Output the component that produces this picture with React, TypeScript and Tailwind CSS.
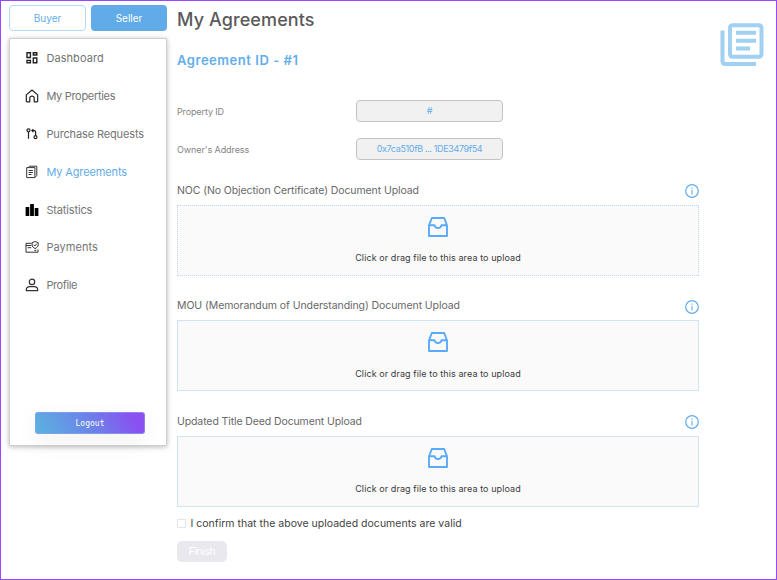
import React from 'react';

function DashboardIcon() {
  return (
    <svg width="14" height="14" viewBox="0 0 14 14" fill="none" stroke="#222" strokeWidth="1.4">
      <path d="M2 1.700h3.400v4.800H2zM8.300 1.700h3.500v2.300H8.300zM2 9.400h3.400v2.400H2zM8.300 7h3.500v4.800H8.300z" />
    </svg>
  );
}

function HomeIcon() {
  return (
    <svg width="14" height="14" viewBox="0 0 14 14" fill="none" stroke="#222" strokeWidth="1.2" strokeLinejoin="round">
      <path d="M1.300 5.900 7 1l5.700 4.900V12c0 .5-.2.800-.7.800H9.200V9.200C9.200 8 8.300 7.200 7 7.200S4.800 8 4.800 9.200v3.600H2c-.5 0-.7-.3-.7-.8Z" />
    </svg>
  );
}

function RequestsIcon() {
  return (
    <svg width="14" height="14" viewBox="0 0 14 14" fill="none" stroke="#222" strokeWidth="1.200">
      <circle cx="3.500" cy="3.300" r="1.500" />
      <path d="M3.500 4.800v7M7 3.600h2.300c.9 0 1.300.5 1.300 1.300v3.700M8.400 2.100 6.900 3.600l1.500 1.500" />
      <circle cx="10.500" cy="10.200" r="1.500" />
    </svg>
  );
}

function AgreementsIcon() {
  return (
    <svg width="14" height="14" viewBox="0 0 14 14" fill="none" stroke="#333" strokeWidth="1" strokeLinejoin="round">
      <path d="M3.300 2.500 4.500 1.200h7.300v9.300l-1.600 1.700M1.700 2.600h8.200v10H1.700ZM3.700 5.500h4.200M3.700 7.500h4.200M3.700 9.500h2.800" />
    </svg>
  );
}

function StatisticsIcon() {
  return (
    <svg width="14" height="14" viewBox="0 0 14 14" fill="#000">
      <rect x="0.600" y="4" width="3.700" height="9" rx=".5" />
      <rect x="5.100" y="1" width="3.800" height="12" rx=".5" />
      <rect x="9.700" y="5" width="3.700" height="8" rx=".5" />
    </svg>
  );
}

function PaymentsIcon() {
  return (
    <svg width="14" height="14" viewBox="0 0 14 14" fill="none" stroke="#333" strokeWidth="1">
      <path d="M6.500 3.300H1v8.900h12V9.500M1 5.500h5.300M2.700 7.700h3.500M9.300 10.300h2" />
      <path d="M10.100 1.500 13.200 2.700v2.100c0 1.700-1.200 2.900-3.100 3.700C8.200 7.700 7.100 6.500 7.100 4.800V2.700ZM8.600 4.800l1.200 1.200 2-2.300" />
    </svg>
  );
}

function ProfileIcon() {
  return (
    <svg width="14" height="14" viewBox="0 0 14 14" fill="none" stroke="#333" strokeWidth="1.200">
      <circle cx="7" cy="3.900" r="2.700" />
      <path d="M1.300 12.700v-.6c0-2 1.500-3.400 3.400-3.400h4.600c1.900 0 3.400 1.400 3.400 3.400v.6Z" />
    </svg>
  );
}

function LibraryIcon() {
  return (
    <svg width="44" height="44" viewBox="0 0 44 44" fill="none" stroke="#a0d0f2" strokeWidth="4">
      <rect x="10" y="2.200" width="31.500" height="31.500" rx="2.500" />
      <path d="M2.500 7.500v30.800c0 1.800 1 2.800 2.800 2.800H36M16 9.700h20M16 17.700h20M16 25.500h14" />
    </svg>
  );
}

function InboxIcon() {
  return (
    <svg width="20" height="20" viewBox="0 0 20 20" fill="none" stroke="#5aaafa" strokeWidth="1.900" strokeLinejoin="round">
      <path d="M1 8.300 3.800 1h12.400L19 8.300V19H1ZM1 8.300h5.600c.3 1.700 1.600 2.700 3.400 2.700s3.100-1 3.400-2.700H19" />
    </svg>
  );
}

function InfoIcon() {
  return (
    <svg width="14" height="14" viewBox="0 0 14 14" fill="none" stroke="#63ade8">
      <circle cx="7" cy="7" r="6.300" strokeWidth="1.200" />
      <path d="M7 5.800v4.700M7 3.500v1.300" strokeWidth="1.100" />
    </svg>
  );
}

const navItems = [
  { label: 'Dashboard', icon: <DashboardIcon />, style: 'text-[#747474] tracking-[0.07px]' },
  { label: 'My Properties', icon: <HomeIcon />, style: 'text-[#747474] tracking-[-0.31px]' },
  { label: 'Purchase Requests', icon: <RequestsIcon />, style: 'text-[#747474] tracking-[-0.135px]' },
  { label: 'My Agreements', icon: <AgreementsIcon />, style: 'text-[#63ade8] tracking-[-0.128px]' },
  { label: 'Statistics', icon: <StatisticsIcon />, style: 'text-[#747474] tracking-[-0.145px]' },
  { label: 'Payments', icon: <PaymentsIcon />, style: 'text-[#747474] tracking-[0.06px]' },
  { label: 'Profile', icon: <ProfileIcon />, style: 'text-[#747474] tracking-[-0.39px]' },
];

const uploads = [
  {
    label: 'NOC (No Objection Certificate) Document Upload',
    tracking: 'tracking-[-0.09px]',
    border: 'border-dotted border-[#b4d8f5]',
  },
  {
    label: 'MOU (Memorandum of Understanding) Document Upload',
    tracking: 'tracking-[-0.078px]',
    border: 'border-solid border-[#cfe5f7]',
  },
  {
    label: 'Updated Title Deed Document Upload',
    tracking: 'tracking-[-0.106px]',
    border: 'border-solid border-[#cfe5f7]',
  },
];

function Sidebar() {
  return (
    <aside className="w-[158px] shrink-0 pt-1">
      <div className="flex gap-[5px]">
        <button className="h-[26px] w-[77px] rounded-[4px] border border-[#b3d9f7] text-[10px] text-[#63ade8]">Buyer</button>
        <button className="h-[26px] w-[76px] rounded-[4px] bg-[#60abe8] text-[10px] tracking-[-0.03px] text-white">Seller</button>
      </div>
      <div className="mt-[7px] flex h-[408px] flex-col border border-[#d0d0d0] bg-white shadow-[0_1px_5px_rgba(0,0,0,0.28)]">
        <nav>
          {navItems.map((item) => (
            <a key={item.label} className="flex h-[37.9px] items-center gap-[7.4px] pl-[15px]">
              {item.icon}
              <span className={`pt-[1px] text-[11px] leading-none whitespace-nowrap ${item.style}`}>{item.label}</span>
            </a>
          ))}
        </nav>
        <button className="mt-auto mb-[11px] ml-[25px] h-[22px] w-[110px] rounded-[3px] border border-[#8fa4ee]/60 bg-[linear-gradient(60deg,#5ab4e0_0%,#6a85e8_48%,#8a50f2_88%)] bg-origin-border pt-px font-['DejaVu_Sans_Mono',monospace] text-[8px] text-white shadow-[0_8px_26px_rgba(0,0,0,0.06)]">
          Logout
        </button>
      </div>
    </aside>
  );
}

function Field({ label, value, labelStyle, valueStyle }: { label: string; value: string; labelStyle: string; valueStyle: string }) {
  return (
    <div className="flex h-[22px] items-center">
      <span className={`w-[179px] pt-px text-[9px] text-[#858585] ${labelStyle}`}>{label}</span>
      <div className={`flex h-[22px] w-[147px] items-center justify-center rounded-[4px] border border-[#c4c4c4] bg-[#f1f1f1] text-[9px] text-[#63ade8] ${valueStyle}`}>
        {value}
      </div>
    </div>
  );
}

export default function App() {
  return (
    <div className="flex h-[580px] w-[777px] overflow-hidden border border-[#9747ff] bg-white pl-2 font-['Inter',sans-serif]">
      <Sidebar />
      <main className="ml-[10px] w-[522px] shrink-0">
        <h1 className="h-[37px] text-[18px] leading-[37px] font-medium tracking-[0.1px] text-[#5a5a5a]">My Agreements</h1>
        <h2 className="mt-[12px] h-[22px] text-[13px] leading-[21px] font-semibold tracking-[0.54px] text-[#63ade8]">Agreement ID - #1</h2>
        <div className="mt-[28px] flex flex-col gap-4">
          <Field label="Property ID" value="#" labelStyle="tracking-[-0.13px]" valueStyle="" />
          <Field label="Owner's Address" value="0x7ca510fB ... 1DE3479f54" labelStyle="tracking-[-0.08px]" valueStyle="tracking-[-0.355px]" />
        </div>
        <div className="mt-[19px] flex flex-col gap-[18.4px]">
          {uploads.map((upload) => (
            <section key={upload.label}>
              <div className="flex h-[26px] items-start justify-between">
                <span className={`text-[10.5px] leading-[23.4px] text-[#686868] ${upload.tracking}`}>{upload.label}</span>
                <span className="pt-[5.4px]"><InfoIcon /></span>
              </div>
              <div className={`flex h-[71px] flex-col items-center border bg-[#fafafa] pt-[11px] ${upload.border}`}>
                <InboxIcon />
                <p className="mt-[14.3px] text-[9px] leading-[13px] tracking-[0.09px] text-[#3a3a3a]">Click or drag file to this area to upload</p>
              </div>
            </section>
          ))}
        </div>
        <label className="mt-[10px] flex h-[13px] items-center gap-[4.4px]">
          <span className="h-[9px] w-[9px] border border-[#e6e6e6] bg-white" />
          <span className="text-[10.5px] leading-[13px] tracking-[0.015px] text-[#424242]">I confirm that the above uploaded documents are valid</span>
        </label>
        <button className="mt-[11px] block h-[21px] w-[50px] rounded-[5px] bg-[#e8e8ee] pt-px text-[10.5px] tracking-[-0.44px] text-white">Finish</button>
      </main>
      <div className="ml-[21px] pt-[22px]">
        <LibraryIcon />
      </div>
    </div>
  );
}
